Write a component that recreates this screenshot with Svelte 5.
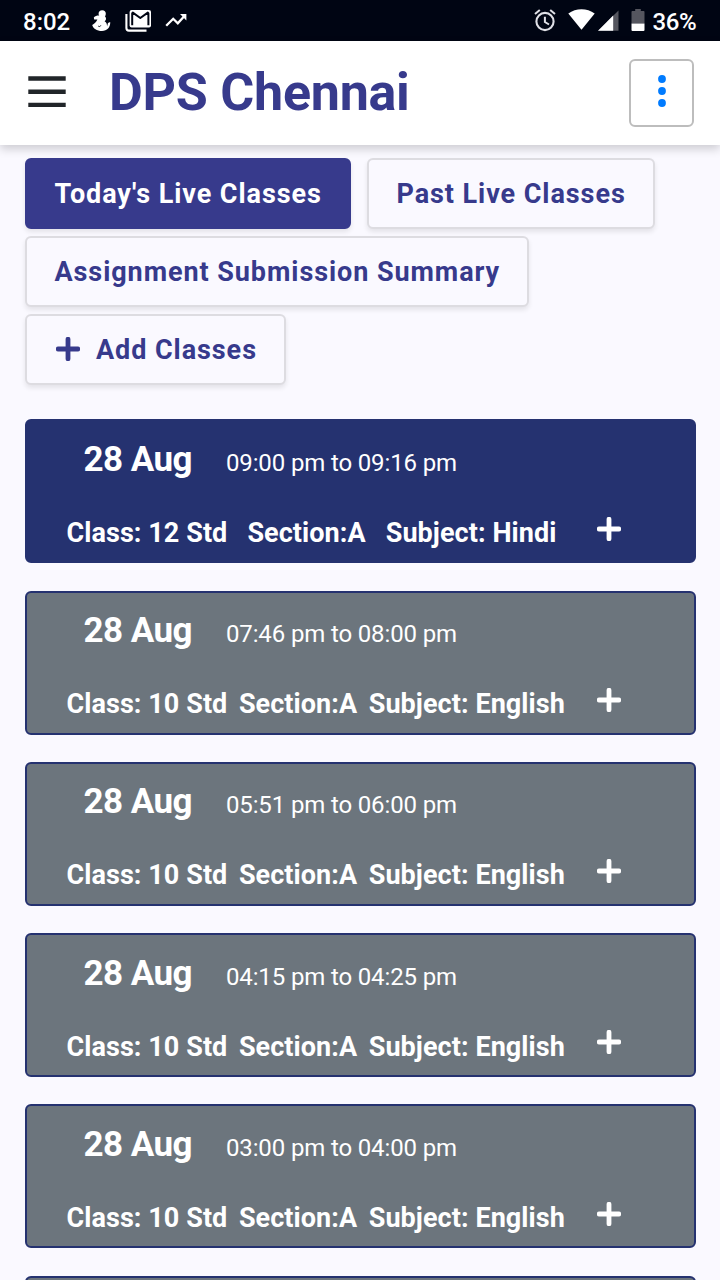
<script>
  const tabs = [
    { label: "Today's Live Classes", width: 326, active: true },
    { label: 'Past Live Classes', width: 288 },
    { label: 'Assignment Submission Summary', width: 504 },
    { label: 'Add Classes', width: 261, icon: true }
  ];
  const sessions = [
    { time: '09:00 pm to 09:16 pm', std: '12', subject: 'Hindi', current: true },
    { time: '07:46 pm to 08:00 pm', std: '10', subject: 'English' },
    { time: '05:51 pm to 06:00 pm', std: '10', subject: 'English' },
    { time: '04:15 pm to 04:25 pm', std: '10', subject: 'English' },
    { time: '03:00 pm to 04:00 pm', std: '10', subject: 'English' }
  ];
</script>

{#snippet plus()}
  <svg class="plus" width="24" height="24" viewBox="0 0 24 24">
    <path d="M12 2.2v19.6M2.2 12h19.6" fill="none" stroke="currentColor" stroke-width="4.8" stroke-linecap="round" />
  </svg>
{/snippet}

<div class="screen">
  <div class="status">
    <span class="clock">8:02</span>
    <svg class="figure" width="19" height="22" viewBox="0 0 19 22">
      <circle cx="10.2" cy="3.8" r="3.6" fill="#fff" />
      <path d="M1.8 7.6C4 5.2 7 5.2 8.5 6H12.8C14.6 8 14.4 10 12.6 11.2C14.6 12.6 15.2 14.3 15 16.4L16 13.1L18.2 12C18.6 17.2 15 21 10 21C4.7 21 1.2 18.5.2 15C2.2 13.6 4.4 11.7 5.4 9.4L2.2 9.6Z" fill="#fff" />
      <path d="M6.2 16C7.2 17 8.4 16.6 8.8 15.4" fill="none" stroke="#000513" stroke-width=".9" />
    </svg>
    <svg class="mail" width="27" height="23" viewBox="0 0 27 23">
      <path d="M1.4 4V18Q1.4 20.6 4 20.6H21.5" fill="none" stroke="#fff" stroke-width="2.1" />
      <rect x="4.6" y="0" width="21.4" height="17.4" rx="2" fill="#fff" />
      <path d="M7.2 15.3V3.4L7.8 2.6L15.3 8L22.8 2.6L23.4 3.4V15.3" fill="none" stroke="#000513" stroke-width="2" stroke-linejoin="round" />
    </svg>
    <svg class="trend" width="23" height="15" viewBox="0 0 23 15">
      <path d="M1.2 12.8L8.2 5.8L12.8 10.3L19.2 3.2" fill="none" stroke="#fff" stroke-width="2.3" />
      <path d="M15 1H21.4V7.4Z" fill="#fff" />
    </svg>
    <svg class="alarm" width="22" height="23" viewBox="0 0 22 23">
      <circle cx="11" cy="12.5" r="8.6" fill="none" stroke="#dfe0e6" stroke-width="2.1" />
      <path d="M1 5.1L5.8 1M16.2 1L21 5.1M10.9 7.7V13L15 15.5" fill="none" stroke="#dfe0e6" stroke-width="2" />
    </svg>
    <svg class="wifi" width="27" height="21" viewBox="0 0 27 21">
      <path d="M.3 4.5C8-1.2 19-1.2 26.7 4.5L13.5 20.8Z" fill="#fff" />
    </svg>
    <svg class="signal" width="21" height="21" viewBox="0 0 21 21">
      <path d="M20.5.4V20.7H0Z" fill="#55565f" />
      <path d="M15.2 5.6V20.7H0Z" fill="#fff" />
    </svg>
    <svg class="battery" width="14" height="22" viewBox="0 0 14 22">
      <path d="M4.2 0H9.8V2H12.7Q13.5 2 13.5 3V14.5H.5V3Q.5 2 1.3 2H4.2Z" fill="#55565f" />
      <path d="M.5 14.5H13.5V21Q13.5 22 12.5 22H1.5Q.5 22 .5 21Z" fill="#fff" />
    </svg>
    <span class="percent">36%</span>
  </div>

  <header>
    <svg class="menu" width="38" height="32" viewBox="0 0 38 32">
      <path d="M.3 2.5H37.7M.3 15.7H37.7M.3 28.9H37.7" stroke="#212529" stroke-width="4.4" />
    </svg>
    <h1>DPS Chennai</h1>
    <button class="more" aria-label="More">
      <svg width="10" height="36" viewBox="0 0 10 36">
        <circle cx="5" cy="6" r="3.9" fill="#007bff" />
        <circle cx="5" cy="18" r="3.9" fill="#007bff" />
        <circle cx="5" cy="30" r="3.9" fill="#007bff" />
      </svg>
    </button>
  </header>

  <nav>
    {#each tabs as tab}
      <button class="tab" class:active={tab.active} style:width="{tab.width}px">
        {#if tab.icon}{@render plus()}{/if}<span>{tab.label}</span>
      </button>
    {/each}
  </nav>

  <main>
    {#each sessions as s}
      <article class:current={s.current}>
        <div class="when"><strong>28 Aug</strong><span>{s.time}</span></div>
        <div class="details">
          <div class="facts">
            <span>Class: {s.std} Std</span><span>Section:A</span><span>Subject: {s.subject}</span>
          </div>
          {@render plus()}
        </div>
      </article>
    {/each}
    <article></article>
  </main>
</div>

<style>
  :global(body) { margin: 0; background: #faf9ff; }
  * { box-sizing: border-box; }
  .screen {
    width: 720px;
    height: 1280px;
    overflow: hidden;
    background: #faf9ff;
    font-family: Roboto, sans-serif;
    display: flex;
    flex-direction: column;
  }
  svg { display: block; flex: none; }
  .status {
    height: 41px;
    flex: none;
    background: #000513;
    color: #fff;
    display: flex;
    align-items: flex-start;
    padding: 0 24px 0 23px;
  }
  .clock, .percent { font-size: 24px; font-weight: 500; line-height: 28px; margin-top: 8px; white-space: nowrap; }
  .clock { width: 69px; }
  .percent { width: 43.5px; margin-left: 7.5px; letter-spacing: -.4px; }
  .figure { margin-top: 10px; }
  .mail { margin: 10px 0 0 14px; }
  .trend { margin: 13px 0 0 13px; }
  .alarm { margin: 9px 0 0 auto; }
  .wifi { margin: 9px 0 0 12.5px; }
  .signal { margin: 10px 0 0 3px; }
  .battery { margin: 9px 0 0 12px; }
  header {
    height: 104px;
    flex: none;
    background: #fff;
    display: flex;
    align-items: center;
    padding: 0 26px 0 27.5px;
    box-shadow: 0 4px 9px rgba(0, 0, 0, .18);
    position: relative;
  }
  .menu { margin-bottom: 2px; }
  h1 { margin: 0 0 0 43.5px; color: #373a8c; font-size: 52px; font-weight: 700; letter-spacing: -.25px; line-height: 60px; white-space: nowrap; }
  .more {
    width: 65px;
    height: 68px;
    margin-left: auto;
    padding: 0;
    border: 2px solid #bdbdbd;
    border-radius: 6px;
    background: #fff;
    display: flex;
    align-items: center;
    justify-content: center;
  }
  .more svg { margin-bottom: 4px; }
  nav { display: flex; flex-wrap: wrap; gap: 7px 16px; padding: 13px 25px 0; flex: none; }
  .tab {
    height: 71px;
    padding: 0 0 0 27.5px;
    border: 2px solid #dddce1;
    border-radius: 6px;
    background: #faf9ff;
    color: #373a8c;
    font: 700 27px/32px Roboto, sans-serif;
    letter-spacing: .93px;
    white-space: nowrap;
    display: flex;
    align-items: center;
    box-shadow: 0 3px 5px rgba(0, 0, 0, .09);
  }
  .tab .plus { margin: 0 16.5px 2px 1px; }
  .tab.active { background: #373a8c; border-color: #373a8c; color: #fff; }
  main { padding: 34.3px 24.5px 0 25px; display: flex; flex-direction: column; gap: 27.25px; }
  article {
    height: 144px;
    flex: none;
    border: 2px solid #253270;
    border-radius: 6px;
    background: #6c757d;
    color: #fff;
    display: flex;
    flex-direction: column;
    padding: 17.65px 0 0 39.5px;
  }
  article.current { background: #253270; }
  .when { display: flex; align-items: baseline; padding-left: 17px; height: 42px; }
  .when strong { font-size: 35px; font-weight: 700; letter-spacing: -.55px; line-height: 42px; width: 142.5px; white-space: nowrap; }
  .when span { font-size: 24px; letter-spacing: -.14px; line-height: 28px; white-space: nowrap; }
  .details { display: flex; align-items: flex-start; margin-top: 35px; }
  .details .plus { margin-top: .6px; }
  .facts { display: flex; gap: 11.5px; width: 530px; font-size: 27px; font-weight: 700; letter-spacing: .07px; line-height: 34px; white-space: nowrap; }
  .current .facts { gap: 20px; }
</style>
